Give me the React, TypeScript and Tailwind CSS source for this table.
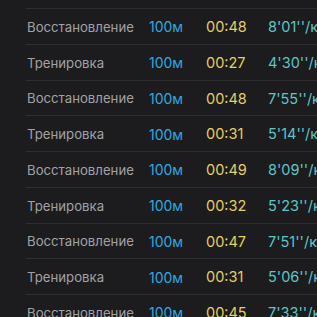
import React from 'react';

type Split = {
    kind: string;
    distance: string;
    time: string;
    pace: string;
};

const splits: Split[] = [
    { kind: 'Восстановление', distance: '100м', time: '00:48', pace: "8'01''/км" },
    { kind: 'Тренировка', distance: '100м', time: '00:27', pace: "4'30''/км" },
    { kind: 'Восстановление', distance: '100м', time: '00:48', pace: "7'55''/км" },
    { kind: 'Тренировка', distance: '100м', time: '00:31', pace: "5'14''/км" },
    { kind: 'Восстановление', distance: '100м', time: '00:49', pace: "8'09''/км" },
    { kind: 'Тренировка', distance: '100м', time: '00:32', pace: "5'23''/км" },
    { kind: 'Восстановление', distance: '100м', time: '00:47', pace: "7'51''/км" },
    { kind: 'Тренировка', distance: '100м', time: '00:31', pace: "5'06''/км" },
    { kind: 'Восстановление', distance: '100м', time: '00:45', pace: "7'33''/км" },
];

export default function App() {
    return (
        <div
            className="w-[317px] h-[317px] overflow-hidden bg-[#1c1c1e] pt-[8px] pl-[26px]"
            style={{ fontFamily: 'Inter, "Noto Sans", sans-serif' }}
        >
            {splits.map((s, i) => (
                <div
                    key={i}
                    className="flex items-center h-[35.75px] pt-[2px] border-t border-[#2e2e31] text-[13.2px] leading-none whitespace-nowrap"
                >
                    <span className="w-[123px] shrink-0 pl-[1px] text-[#a1a1a6]">{s.kind}</span>
                    <span className="w-[57px] shrink-0 text-[#2fa7e2] text-[14px]">{s.distance}</span>
                    <span className="w-[62px] shrink-0 text-[#e5cf5d] text-[14.5px]">{s.time}</span>
                    <span className="shrink-0 text-[#5cc5c7] text-[14.5px]">{s.pace}</span>
                </div>
            ))}
        </div>
    );
}
